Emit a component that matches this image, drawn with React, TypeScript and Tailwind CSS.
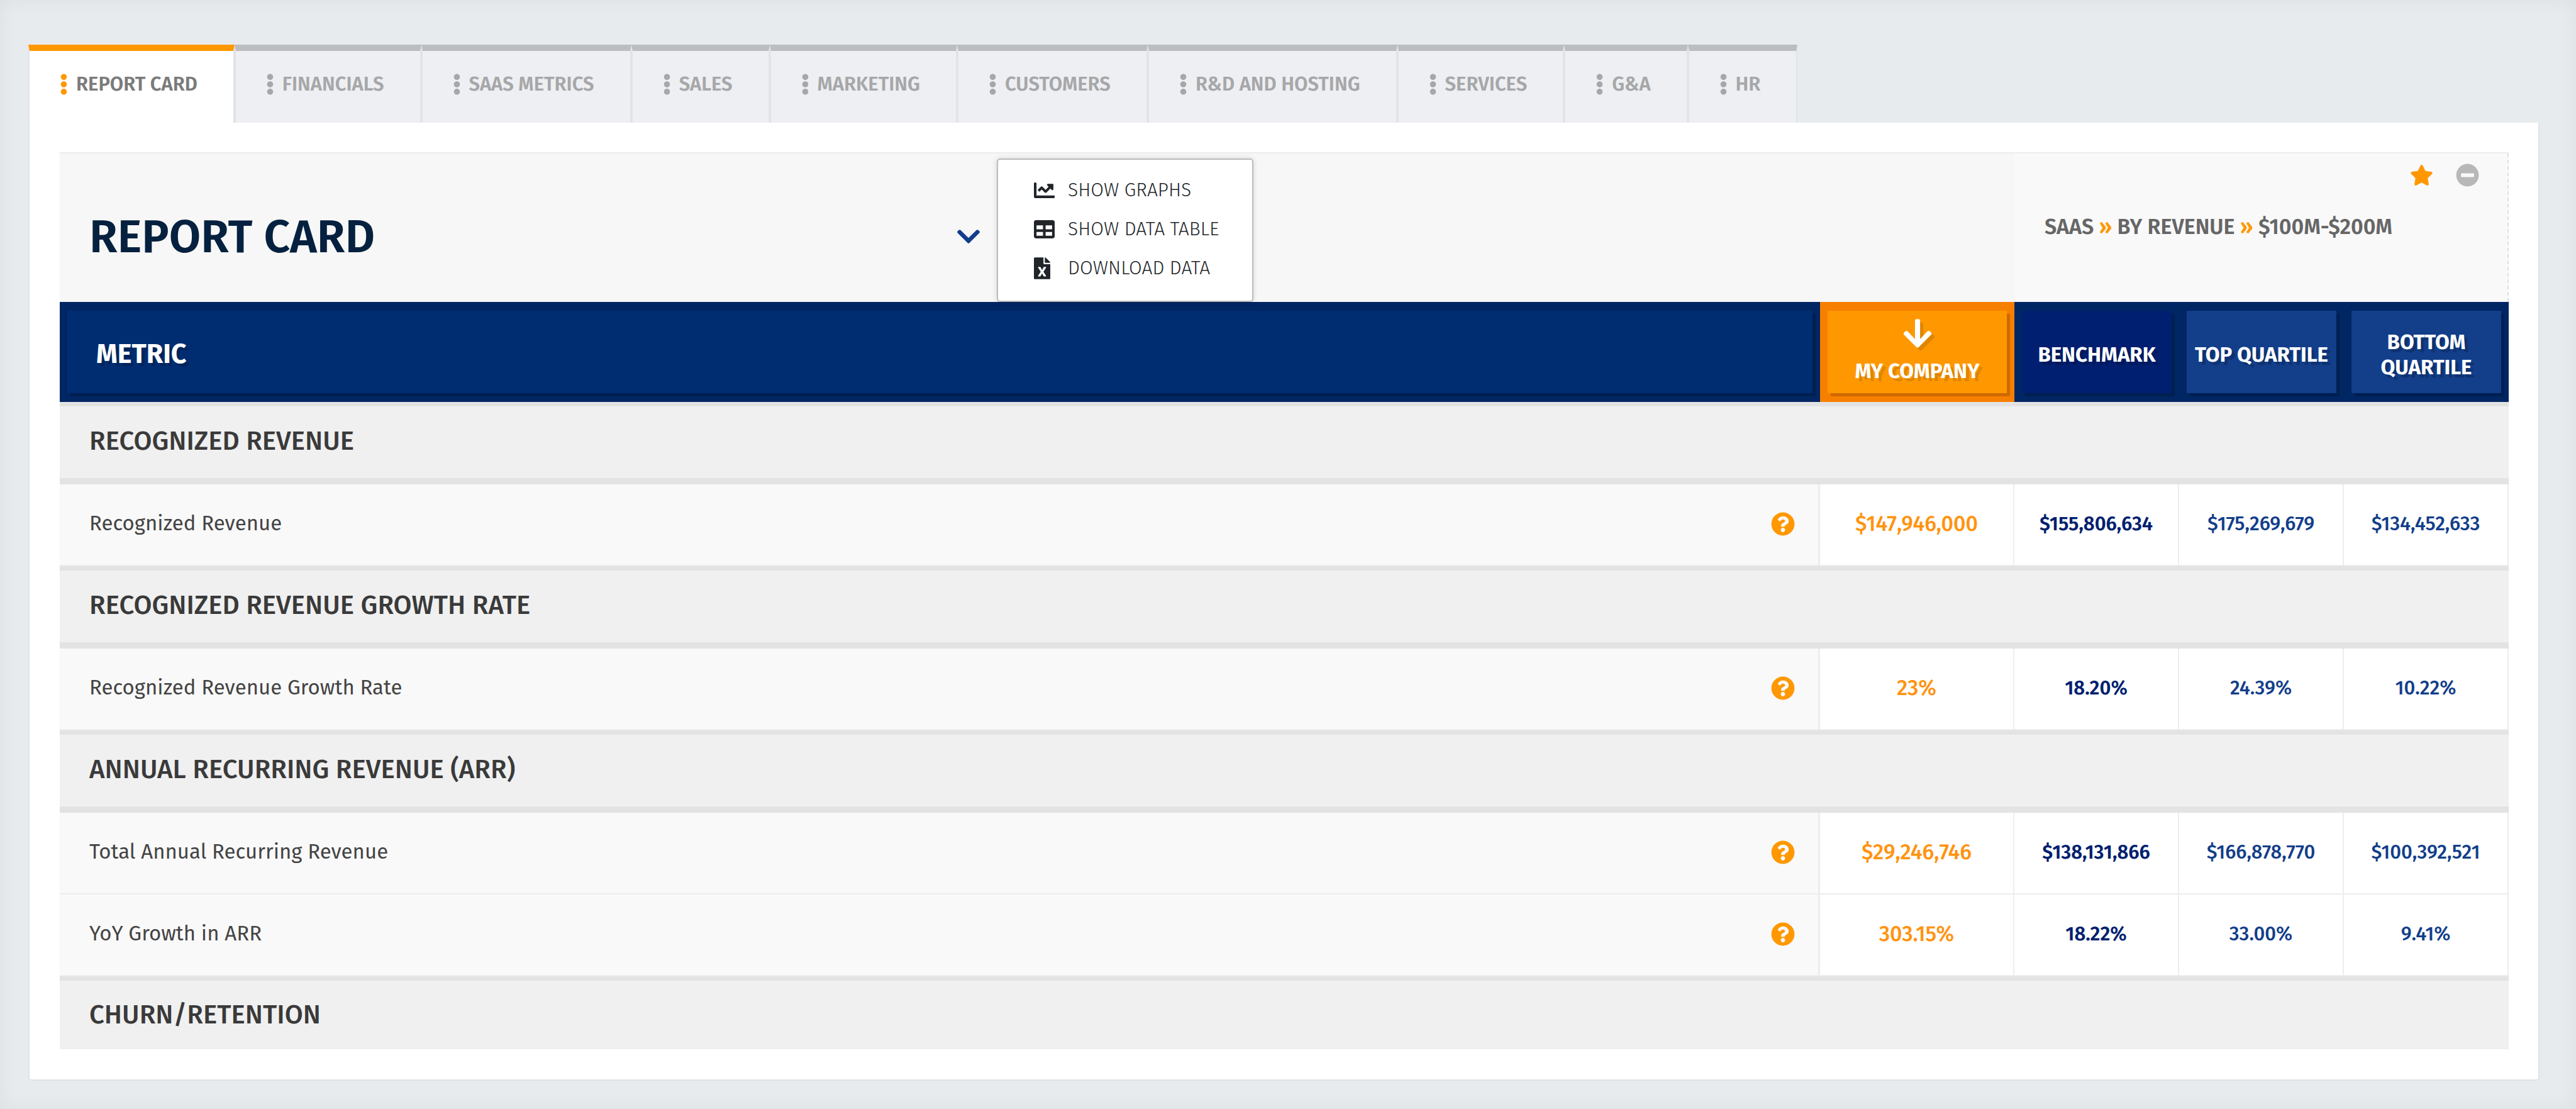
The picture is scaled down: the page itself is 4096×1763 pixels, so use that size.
import { useState } from "react"
import {
  FaArrowDown,
  FaChartLine,
  FaChevronDown,
  FaEllipsisV,
  FaFileExcel,
  FaMinusCircle,
  FaQuestionCircle,
  FaStar,
  FaTable,
} from "react-icons/fa"

const tabs = [
  "REPORT CARD",
  "FINANCIALS",
  "SAAS METRICS",
  "SALES",
  "MARKETING",
  "CUSTOMERS",
  "R&D AND HOSTING",
  "SERVICES",
  "G&A",
  "HR",
]

const menuItems = [
  { label: "SHOW GRAPHS", icon: FaChartLine, iconClass: "h-[33px] w-[33px]" },
  { label: "SHOW DATA TABLE", icon: FaTable, iconClass: "h-[33px] w-[33px]" },
  { label: "DOWNLOAD DATA", icon: FaFileExcel, iconClass: "h-[35px] w-[26px]" },
]

type Metric = {
  name: string
  company: string
  benchmark: string
  top: string
  bottom: string
}

const sections: { title: string; metrics: Metric[] }[] = [
  {
    title: "RECOGNIZED REVENUE",
    metrics: [
      {
        name: "Recognized Revenue",
        company: "$147,946,000",
        benchmark: "$155,806,634",
        top: "$175,269,679",
        bottom: "$134,452,633",
      },
    ],
  },
  {
    title: "RECOGNIZED REVENUE GROWTH RATE",
    metrics: [
      { name: "Recognized Revenue Growth Rate", company: "23%", benchmark: "18.20%", top: "24.39%", bottom: "10.22%" },
    ],
  },
  {
    title: "ANNUAL RECURRING REVENUE (ARR)",
    metrics: [
      {
        name: "Total Annual Recurring Revenue",
        company: "$29,246,746",
        benchmark: "$138,131,866",
        top: "$166,878,770",
        bottom: "$100,392,521",
      },
      { name: "YoY Growth in ARR", company: "303.15%", benchmark: "18.22%", top: "33.00%", bottom: "9.41%" },
    ],
  },
  { title: "CHURN/RETENTION", metrics: [] },
]

function TabBar({ active, onSelect }: { active: string; onSelect: (tab: string) => void }) {
  return (
    <div role="tablist" className="flex">
      {tabs.map((tab) => {
        const isActive = tab === active
        return (
          <button
            key={tab}
            type="button"
            role="tab"
            aria-selected={isActive}
            onClick={() => onSelect(tab)}
            className={`flex h-[124px] items-center gap-[13px] whitespace-nowrap border-x-2 border-t-10 border-x-[#e2e3ea] pb-2 pl-12 pr-[57px] text-[31px] font-semibold ${
              isActive ? "border-t-[#ff9800] bg-white text-[#7b7b7b]" : "border-t-[#bcbdbf] bg-[#eeeff2] text-[#a6a7a9]"
            }`}
          >
            <FaEllipsisV className={`h-[34px] w-[13px] ${isActive ? "text-[#ff9800]" : ""}`} />
            {tab}
          </button>
        )
      })}
    </div>
  )
}

function CardHeader() {
  return (
    <div className="flex h-[238px] border-t-2 border-[#ececec]">
      <div className="flex flex-1 bg-[#f7f7f7]">
        <div className="flex w-[1464px] items-center justify-between pl-[47px] pt-7">
          <h1 className="text-[73px] font-semibold leading-none text-[#05213f]">REPORT CARD</h1>
          <button type="button" aria-label="Report options" className="text-[#123e8a]">
            <FaChevronDown className="h-[42px] w-[38px]" />
          </button>
        </div>
        <ul className="ml-[26px] mt-2 flex w-[408px] flex-col justify-center rounded-[5px] border-2 border-[#bcbcbc] bg-white pb-1 pl-[57px] text-[30px] font-light text-[#212529] shadow-[0_0_8px_rgba(0,0,0,0.15)]">
          {menuItems.map(({ label, icon: Icon, iconClass }) => (
            <li key={label}>
              <button type="button" className="flex h-[62px] items-center whitespace-nowrap">
                <span className="w-[54px]">
                  <Icon className={iconClass} />
                </span>
                {label}
              </button>
            </li>
          ))}
        </ul>
      </div>

      <div className="w-[786px] border-r-2 border-dashed border-r-[#dde1e5] bg-[#f9f9f9] pl-12">
        <div className="flex items-center justify-end gap-9 pr-[45px] pt-4 text-[37px]">
          <button type="button" aria-label="Favorite" className="text-[#ff9800]">
            <FaStar />
          </button>
          <button type="button" aria-label="Remove" className="text-[#b8b8b8]">
            <FaMinusCircle />
          </button>
        </div>
        <div className="mt-10 whitespace-nowrap text-[34px] font-semibold leading-[48px] text-[#666666]">
          SAAS <span className="text-[#ff9800]">»</span> BY REVENUE <span className="text-[#ff9800]">»</span> $100M-$200M
        </div>
      </div>
    </div>
  )
}

function HeaderCell({ label, className }: { label: string; className: string }) {
  return (
    <th scope="col" className="h-[159px] bg-[#002663] px-3 py-[14px]">
      <div
        className={`flex h-[131px] items-center justify-center pt-2 text-[33px] font-bold leading-10 shadow-[5px_5px_0_rgba(0,0,0,0.17)] text-shadow-[5px_5px_0_rgba(0,0,0,0.2)] ${className}`}
      >
        {label}
      </div>
    </th>
  )
}

function MetricRow({ metric }: { metric: Metric }) {
  return (
    <tr className="h-[130px]">
      <th scope="row" className="border-b-2 border-r-3 border-[#ededed] bg-[#f9f9f9] pb-0.5 pl-[47px] pr-[37px] font-normal">
        <div className="flex items-center justify-between text-[33px] text-[#444444]">
          {metric.name}
          <button type="button" aria-label={`About ${metric.name}`} className="text-[38px] text-[#ff9800]">
            <FaQuestionCircle />
          </button>
        </div>
      </th>
      <td className="border-b-2 border-r-2 border-[#ededed] pb-1 text-[34px] text-[#ff9310]">{metric.company}</td>
      <td className="border-b-2 border-r-2 border-[#ededed] pb-0.5 text-[31px] font-semibold text-[#001f70]">
        {metric.benchmark}
      </td>
      <td className="border-b-2 border-r-2 border-[#ededed] pb-0.5 text-[31px] text-[#123e8a]">{metric.top}</td>
      <td className="border-b-2 border-r-2 border-[#ededed] pb-0.5 text-[31px] text-[#123e8a]">{metric.bottom}</td>
    </tr>
  )
}

function MetricsTable() {
  return (
    <table className="w-full table-fixed border-separate border-spacing-0 text-center font-medium">
      <colgroup>
        <col />
        <col className="w-[309px]" />
        <col className="w-[262px]" />
        <col className="w-[262px]" />
        <col className="w-[262px]" />
      </colgroup>
      <thead className="text-white">
        <tr>
          <th scope="col" className="h-[159px] bg-[#002663] px-3 py-[14px] text-left">
            <div className="flex h-[131px] items-center bg-[#002d72] pl-[46px] pt-2 text-[43px] font-bold shadow-[5px_5px_0_rgba(0,0,0,0.17)] text-shadow-[5px_5px_0_rgba(0,0,0,0.2)]">
              METRIC
            </div>
          </th>
          <th scope="col" className="h-[159px] bg-[#f77f00] px-3 py-[14px]">
            <div className="flex h-[131px] flex-col items-center gap-3.5 bg-[#ff9800] pt-2.5 text-[33px] font-bold leading-10 shadow-[5px_5px_0_rgba(0,0,0,0.17)] text-shadow-[5px_5px_0_rgba(0,0,0,0.12)]">
              <FaArrowDown className="text-[52px] drop-shadow-[5px_5px_0_rgba(0,0,0,0.12)]" />
              MY COMPANY
            </div>
          </th>
          <HeaderCell label="BENCHMARK" className="bg-[#001f70]" />
          <HeaderCell label="TOP QUARTILE" className="whitespace-nowrap bg-[#123e8a]" />
          <HeaderCell label="BOTTOM QUARTILE" className="bg-[#123e8a]" />
        </tr>
      </thead>
      {sections.map(({ title, metrics }) => (
        <tbody key={title}>
          <tr className={metrics.length ? "h-[131px]" : "h-[116px]"}>
            <th
              scope="colgroup"
              colSpan={5}
              className={`border-t-7 border-[#e3e3e3] bg-[#f0f0f0] pl-[47px] text-left text-[42px] font-medium text-[#3a3a3a] ${
                metrics.length ? "border-b-10 pb-1" : ""
              }`}
            >
              {title}
            </th>
          </tr>
          {metrics.map((metric) => (
            <MetricRow key={metric.name} metric={metric} />
          ))}
        </tbody>
      ))}
    </table>
  )
}

export default function App() {
  const [activeTab, setActiveTab] = useState("REPORT CARD")

  return (
    <div className="min-h-screen bg-[#e8ebee] pb-[46px] pl-[45px] pr-[58px] pt-[71px] font-['Fira_Sans','Roboto',sans-serif] shadow-[inset_0_0_30px_rgba(0,0,0,0.05)]">
      <TabBar active={activeTab} onSelect={setActiveTab} />
      <main className="rounded-b-[5px] border-x-2 border-b-2 border-[#dfe2e6] bg-white pb-12 pl-12 pr-[47px] pt-[47px]">
        <CardHeader />
        <MetricsTable />
      </main>
    </div>
  )
}
